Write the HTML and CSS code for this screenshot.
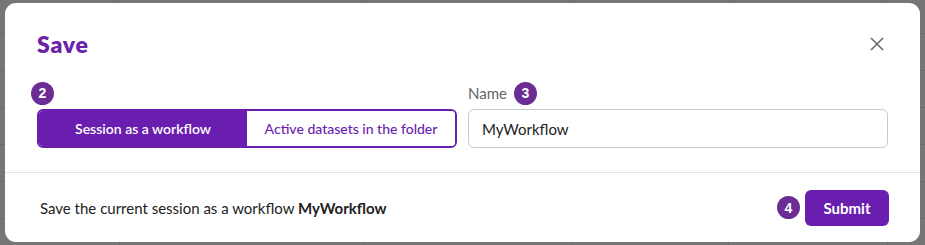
FILE: index.html
```html
<!DOCTYPE html>
<html lang="en">
<head>
<meta charset="utf-8">
<title>Save</title>
<link rel="stylesheet" href="styles.css">
</head>
<body>
<div class="backdrop">
  <div class="grid-row"></div>
  <div class="grid-row"></div>
  <div class="grid-row"></div>
  <div class="grid-row"></div>
  <div class="grid-row"></div>
  <div class="grid-row"></div>
  <div class="grid-row last">
    <span class="cell c1">10,000</span><span class="cell c2">OWN</span><span class="cell c3">C</span><span class="cell c4">VENTURE</span><span class="cell c5">D</span>
  </div>
</div>
<div class="modal">
  <div class="modal-body">
    <div class="modal-head">
      <h1 class="title">Save</h1>
      <button class="close" aria-label="Close">
        <svg width="14" height="14" viewBox="0 0 14 14"><path d="M1 1L13 13M13 1L1 13" stroke="#6b6b6b" stroke-width="1.6" fill="none"/></svg>
      </button>
    </div>
    <div class="fields">
      <div class="field">
        <div class="label-row"><span class="badge">2</span></div>
        <div class="segmented">
          <button class="seg active">Session as a workflow</button>
          <button class="seg">Active datasets in the folder</button>
        </div>
      </div>
      <div class="field">
        <div class="label-row"><span class="label">Name</span><span class="badge">3</span></div>
        <div class="input">MyWorkflow</div>
      </div>
    </div>
  </div>
  <div class="modal-foot">
    <p class="summary">Save the current session as a workflow <b>MyWorkflow</b></p>
    <div class="actions">
      <span class="badge">4</span>
      <button class="submit">Submit</button>
    </div>
  </div>
</div>
</body>
</html>
```
FILE: styles.css
```css
* { box-sizing: border-box; }
html, body { margin: 0; padding: 0; }
body {
  width: 925px;
  height: 245px;
  overflow: hidden;
  background: #767676;
  font-family: "Source Sans Pro", Lato, "Noto Sans", sans-serif;
  position: relative;
}
.backdrop {
  display: flex;
  flex-direction: column;
  padding-top: 33px;
  height: 245px;
  background-image:
    linear-gradient(#6b6b6b, #6b6b6b),
    linear-gradient(#6b6b6b, #6b6b6b),
    linear-gradient(#6b6b6b, #6b6b6b),
    linear-gradient(#6b6b6b, #6b6b6b),
    linear-gradient(#6b6b6b, #6b6b6b);
  background-size: 1px 100%;
  background-repeat: no-repeat;
  background-position: 119px 0, 363px 0, 572px 0, 728px 0, 887px 0;
}
.grid-row {
  height: 37px;
  border-top: 1px solid #6a6a6a;
  flex: none;
}
.grid-row.last {
  position: relative;
  height: 30px;
  font-family: "Liberation Sans", sans-serif;
  font-size: 14px;
  line-height: 16px;
  color: #2a2a2a;
}
.cell { position: absolute; top: 4px; }
.c1 { left: 72px; }
.c2 { left: 130px; }
.c3 { left: 557px; }
.c4 { left: 581px; }
.c5 { left: 738px; }

.modal {
  position: absolute;
  left: 5px;
  top: 3px;
  width: 915px;
  height: 239px;
  background: #fff;
  border-radius: 11px;
  display: flex;
  flex-direction: column;
}
.modal-body {
  padding: 26px 32px 0 32px;
  height: 170px;
  border-bottom: 1px solid #e3e3e3;
}
.modal-head {
  display: flex;
  justify-content: space-between;
  align-items: center;
  height: 30px;
}
.title {
  margin: 0;
  font-size: 23px;
  font-weight: 800;
  color: #6b21a8;
  letter-spacing: 0.8px;
  line-height: 30px;
}
.close {
  border: 0;
  background: none;
  padding: 0;
  width: 14px;
  height: 14px;
  margin-right: 4px;
  display: flex;
}
.fields {
  display: flex;
  gap: 11px;
  margin-top: 22px;
}
.field { width: 420px; display: flex; flex-direction: column; }
.label-row {
  display: flex;
  align-items: center;
  gap: 7px;
  height: 24px;
  margin-bottom: 4px;
}
.field:first-child .label-row { margin-left: -6px; }
.label {
  font-size: 15px;
  color: #666;
}
.badge {
  width: 23px;
  height: 23px;
  border-radius: 50%;
  background: #6b2d93;
  color: #fff;
  font-family: "Liberation Sans", Arial, sans-serif;
  font-weight: 700;
  font-size: 14px;
  display: flex;
  align-items: center;
  justify-content: center;
  flex: none;
}
.segmented {
  display: flex;
  height: 39px;
  border: 2px solid #6a1eb0;
  border-radius: 6px;
  overflow: hidden;
}
.seg {
  flex: 1;
  border: 0;
  background: #fff;
  color: #6a1eb0;
  font-family: inherit;
  font-size: 14px;
  font-weight: 500;
  padding: 0;
}
.seg.active {
  background: #6a1eb0;
  color: #fff;
  font-weight: 600;
}
.input {
  height: 39px;
  border: 1px solid #c8c8c8;
  border-radius: 6px;
  padding: 0 13px;
  display: flex;
  align-items: center;
  font-size: 15px;
  color: #222;
}
.modal-foot {
  flex: 1;
  display: flex;
  align-items: center;
  justify-content: space-between;
  padding: 0 31px 0 35px;
}
.summary {
  margin: 0;
  font-size: 15px;
  color: #222;
}
.summary b { font-weight: 700; }
.actions {
  display: flex;
  align-items: center;
  gap: 5px;
}
.submit {
  height: 36px;
  width: 84px;
  border: 0;
  border-radius: 6px;
  background: #6a1eb0;
  color: #fff;
  font-family: inherit;
  font-size: 15px;
  font-weight: 700;
}
```
